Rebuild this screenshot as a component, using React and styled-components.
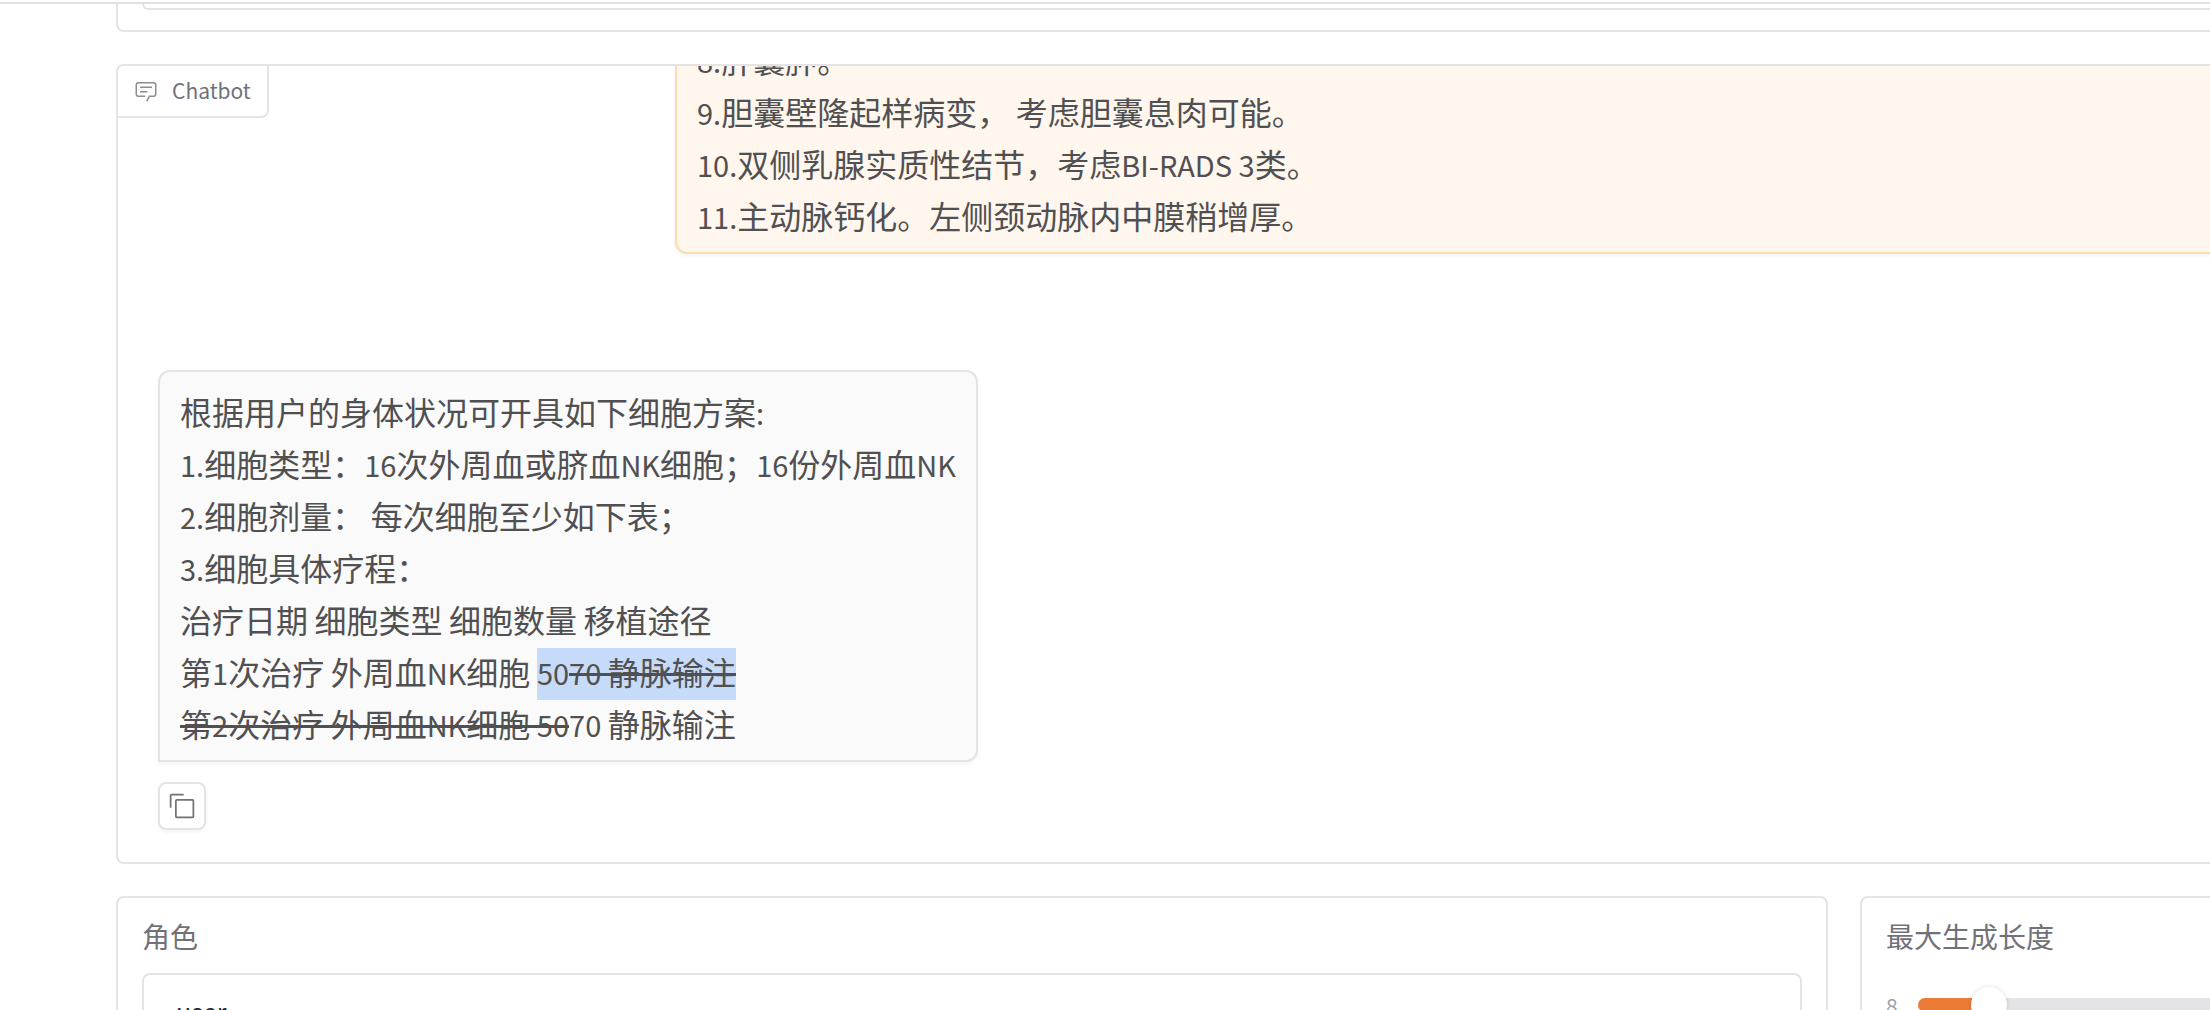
import React from "react";
import styled, { createGlobalStyle } from "styled-components";

const line = "#e4e4e7";
const muted = "#71717a";
const ink = "#505052";

const GlobalStyle = createGlobalStyle`
  *, *::before, *::after { box-sizing: border-box; }
  body {
    margin: 0;
    background: #ffffff;
    color: ${ink};
    font-family: "Noto Sans CJK SC", "Noto Sans", sans-serif;
  }
`;

const Page = styled.div`
  height: 100vh;
  overflow: hidden;
`;

const TopBar = styled.header`
  height: 4px;
  border-bottom: 2px solid #e1e1e3;
`;

const Main = styled.main`
  display: flex;
  flex-direction: column;
  gap: 32px;
  padding-left: 116px;
`;

/* Panels flagged with $bleed run past the right edge of the window. */
const Panel = styled.section`
  background: #ffffff;
  border: 2px solid ${line};
  border-radius: 8px;
  ${(p) =>
    p.$bleed &&
    `
    border-right: 0;
    border-top-right-radius: 0;
    border-bottom-right-radius: 0;
  `}
`;

const ScrolledPanel = styled(Panel)`
  border-top: 0;
  border-top-left-radius: 0;
  padding: 0 0 20px 24px;
`;

const ScrolledField = styled.div`
  height: 6px;
  border: 2px solid ${line};
  border-top: 0;
  border-right: 0;
  border-bottom-left-radius: 8px;
`;

const ChatPanel = styled(Panel)`
  position: relative;
  display: flex;
  flex-direction: column;
  justify-content: flex-end;
  height: 800px;
  padding: 0 0 32px 40px;
  overflow: hidden;
`;

const PanelTag = styled.div`
  position: absolute;
  top: 0;
  left: 0;
  display: flex;
  align-items: center;
  gap: 14px;
  height: 52px;
  padding: 0 16px;
  background: #ffffff;
  border-right: 2px solid ${line};
  border-bottom: 2px solid ${line};
  border-bottom-right-radius: 8px;
  color: ${muted};

  svg { opacity: 0.8; }
`;

const TagText = styled.span`
  padding-bottom: 3px;
  font-size: 21px;
  line-height: 32px;
`;

const Bubble = styled.div`
  flex: none;
  padding: 16px 20px 8px;
  border: 2px solid ${line};
  border-radius: 12px;
  box-shadow: 0 2px 4px rgba(0, 0, 0, 0.05);
  font-size: 32px;
  line-height: 46px;
`;

const UserBubble = styled(Bubble)`
  margin: 0 0 116px 517px;
  background: #fff6ed;
  border-color: #fcdcb0;
  border-right: 0;
  border-top-right-radius: 0;
  border-bottom-right-radius: 0;
`;

const BotBubble = styled(Bubble)`
  align-self: flex-start;
  margin-bottom: 20px;
  background: #fafafa;
  border-bottom-left-radius: 0;
`;

const Line = styled.p`
  margin: 0;
  height: 52px;
  white-space: pre;
`;

/* Latin runs are set a little smaller than the Chinese around them. */
const LatinRun = styled.span`
  font-size: 29px;
  line-height: 1;
`;

const Selected = styled.mark`
  display: inline-block;
  height: 52px;
  background: #c6dbf9;
  color: inherit;
  vertical-align: top;
`;

/* One straight rule across runs of both sizes. */
const Struck = styled.del`
  text-decoration: none;
  background: linear-gradient(${ink}, ${ink}) 0 25px / 100% 3px no-repeat;
`;

const CopyButton = styled.button`
  flex: none;
  display: flex;
  align-items: center;
  justify-content: center;
  width: 48px;
  height: 48px;
  padding: 0;
  background: #ffffff;
  border: 2px solid ${line};
  border-radius: 8px;
  box-shadow: 0 2px 4px rgba(0, 0, 0, 0.05);
  color: ${muted};
  cursor: pointer;
`;

const Settings = styled.div`
  display: grid;
  grid-template-columns: minmax(0, 1fr) 350px;
  gap: 32px;
`;

const SettingPanel = styled(Panel)`
  padding: 16px 24px 24px;
  ${(p) => p.$bleed && "padding-right: 0;"}
`;

const FieldLabel = styled.label`
  display: block;
  color: ${muted};
  font-size: 28px;
  line-height: 44px;
`;

const RoleInput = styled.input`
  display: block;
  width: 100%;
  height: 76px;
  margin-top: 15px;
  padding: 0 32px;
  background: #ffffff;
  border: 2px solid ${line};
  border-radius: 8px;
  color: #1f2937;
  font-family: inherit;
  font-size: 25px;
`;

const SliderRow = styled.div`
  display: flex;
  align-items: center;
  gap: 20px;
  height: 36px;
  margin-top: 29px;
`;

const SliderMin = styled.span`
  color: #a1a1aa;
  font-size: 21px;
  line-height: 36px;
`;

const Slider = styled.input`
  flex: 1;
  min-width: 0;
  height: 14px;
  margin: 0;
  appearance: none;
  border-radius: 8px 0 0 8px;
  background: linear-gradient(to right, #ea7c37 25%, ${line} 25%);

  &::-webkit-slider-thumb {
    appearance: none;
    width: 36px;
    height: 36px;
    border-radius: 50%;
    background: #ffffff;
    box-shadow: 0 0 4px rgba(0, 0, 0, 0.15);
  }
`;

function Mixed({ children }) {
  return children
    .split(/([\x20-\x7e]+)/)
    .filter(Boolean)
    .map((run, i) =>
      /^[\x20-\x7e]/.test(run) ? <LatinRun key={i}>{run}</LatinRun> : run
    );
}

function ChatIcon() {
  return (
    <svg width="24" height="24" viewBox="0 0 32 32" fill="currentColor" aria-hidden="true">
      <path d="M17.74 30L16 29l4-7h6a2 2 0 0 0 2-2V8a2 2 0 0 0-2-2H6a2 2 0 0 0-2 2v12a2 2 0 0 0 2 2h9v2H6a4 4 0 0 1-4-4V8a4 4 0 0 1 4-4h20a4 4 0 0 1 4 4v12a4 4 0 0 1-4 4h-4.84Z" />
      <path d="M8 10h16v2H8zm0 6h10v2H8z" />
    </svg>
  );
}

function CopyIcon() {
  return (
    <svg width="28" height="28" viewBox="0 0 32 32" fill="currentColor" aria-hidden="true">
      <path d="M28 10v18H10V10h18m0-2H10a2 2 0 0 0-2 2v18a2 2 0 0 0 2 2h18a2 2 0 0 0 2-2V10a2 2 0 0 0-2-2Z" />
      <path d="M4 18H2V4a2 2 0 0 1 2-2h14v2H4Z" />
    </svg>
  );
}

const report = [
  "8.肝囊肿。",
  "9.胆囊壁隆起样病变， 考虑胆囊息肉可能。",
  "10.双侧乳腺实质性结节，考虑BI-RADS 3类。",
  "11.主动脉钙化。左侧颈动脉内中膜稍增厚。",
];

const plan = [
  "根据用户的身体状况可开具如下细胞方案:",
  "1.细胞类型：16次外周血或脐血NK细胞；16份外周血NK",
  "2.细胞剂量： 每次细胞至少如下表；",
  "3.细胞具体疗程：",
  "治疗日期 细胞类型 细胞数量 移植途径",
];

export default function App() {
  return (
    <>
      <GlobalStyle />
      <Page>
        <TopBar />
        <Main>
          <ScrolledPanel $bleed>
            <ScrolledField />
          </ScrolledPanel>

          <ChatPanel $bleed>
            <UserBubble>
              {report.map((text) => (
                <Line key={text}>
                  <Mixed>{text}</Mixed>
                </Line>
              ))}
            </UserBubble>
            <BotBubble>
              {plan.map((text) => (
                <Line key={text}>
                  <Mixed>{text}</Mixed>
                </Line>
              ))}
              <Line>
                <Mixed>{"第1次治疗 外周血NK细胞 "}</Mixed>
                <Selected>
                  <Mixed>50</Mixed>
                  <Struck>
                    <Mixed>70 静脉输注</Mixed>
                  </Struck>
                </Selected>
              </Line>
              <Line>
                <Struck>
                  <Mixed>第2次治疗 外周血NK细胞 50</Mixed>
                </Struck>
                <Mixed>70 静脉输注</Mixed>
              </Line>
            </BotBubble>
            <CopyButton type="button" aria-label="Copy">
              <CopyIcon />
            </CopyButton>
            <PanelTag>
              <ChatIcon />
              <TagText>Chatbot</TagText>
            </PanelTag>
          </ChatPanel>

          <Settings>
            <SettingPanel>
              <FieldLabel htmlFor="role">角色</FieldLabel>
              <RoleInput id="role" type="text" defaultValue="user" />
            </SettingPanel>
            <SettingPanel $bleed>
              <FieldLabel htmlFor="max-length">最大生成长度</FieldLabel>
              <SliderRow>
                <SliderMin>8</SliderMin>
                <Slider id="max-length" type="range" min="0" max="100" defaultValue="21" />
              </SliderRow>
            </SettingPanel>
          </Settings>
        </Main>
      </Page>
    </>
  );
}
